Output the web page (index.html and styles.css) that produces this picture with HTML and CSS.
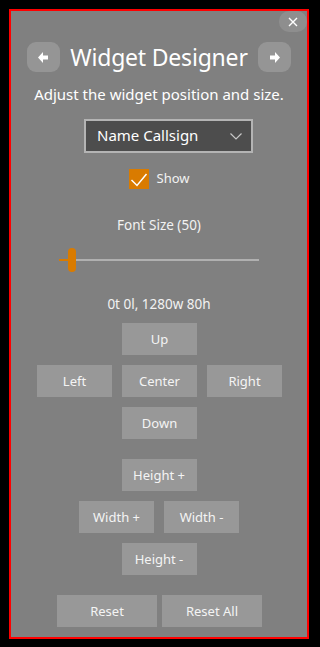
FILE: index.html
```html
<!DOCTYPE html>
<html>
<head>
<meta charset="utf-8">
<link rel="stylesheet" href="styles.css">
</head>
<body>
<div class="panel">
  <button class="close" aria-label="Close">
    <svg width="10" height="10" viewBox="0 0 10 10"><path d="M1 1 L9 9 M9 1 L1 9" stroke="#fff" stroke-width="1.4" fill="none"/></svg>
  </button>
  <div class="header">
    <button class="nav" aria-label="Previous">
      <svg width="11" height="11" viewBox="0 0 11 11"><path d="M0 5.5 L5 0 L5 3.5 L10 3.5 L10 7.5 L5 7.5 L5 11 Z" fill="#fff"/></svg>
    </button>
    <h1 class="title">Widget Designer</h1>
    <button class="nav" aria-label="Next">
      <svg width="11" height="11" viewBox="0 0 11 11"><path d="M11 5.5 L6 0 L6 3.5 L1 3.5 L1 7.5 L6 7.5 L6 11 Z" fill="#fff"/></svg>
    </button>
  </div>
  <p class="subtitle">Adjust the widget position and size.</p>
  <div class="select">
    <span class="select-text">Name Callsign</span>
    <svg class="chevron" width="12" height="7" viewBox="0 0 12 7"><path d="M0.5 0.5 L6 6 L11.5 0.5" stroke="#c8c8c8" stroke-width="1.2" fill="none"/></svg>
  </div>
  <label class="check-row">
    <span class="checkbox">
      <svg width="20" height="20" viewBox="0 0 20 20"><path d="M2.5 11 L8 16.5 L17.5 5" stroke="#fff" stroke-width="1.5" fill="none"/></svg>
    </span>
    <span class="check-label">Show</span>
  </label>
  <div class="label font-label">Font Size (50)</div>
  <div class="slider">
    <div class="track"></div>
    <div class="fill"></div>
    <div class="thumb"></div>
  </div>
  <div class="label status">0t 0l, 1280w 80h</div>
  <div class="pad">
    <button class="btn up">Up</button>
    <button class="btn left">Left</button>
    <button class="btn center">Center</button>
    <button class="btn right">Right</button>
    <button class="btn down">Down</button>
  </div>
  <div class="size">
    <button class="btn hplus">Height +</button>
    <div class="size-row">
      <button class="btn">Width +</button>
      <button class="btn">Width -</button>
    </div>
    <button class="btn">Height -</button>
  </div>
  <div class="reset-row">
    <button class="btn wide">Reset</button>
    <button class="btn wide">Reset All</button>
  </div>
</div>
</body>
</html>
```
FILE: styles.css
```css
* { box-sizing: border-box; }
html, body { margin: 0; }
body {
  background: #000;
  padding: 9px 8px 8px 9px;
  font-family: "Noto Sans", "Open Sans", sans-serif;
  color: #f2f2f2;
}
button { font-family: inherit; border: none; padding: 0; margin: 0; cursor: pointer; }
.panel {
  position: relative;
  width: 300px;
  height: 630px;
  border: 2px solid #ff0000;
  background: #808080;
  display: flex;
  flex-direction: column;
  align-items: center;
}
.close {
  position: absolute;
  top: 0;
  right: 0;
  width: 28px;
  height: 21px;
  border-radius: 10px;
  background: #8e8e8e;
  display: flex;
  align-items: center;
  justify-content: center;
}
.close svg { display: block; }
.header {
  margin-top: 31px;
  width: 100%;
  height: 30px;
  padding: 0 16px;
  display: flex;
  align-items: center;
  justify-content: space-between;
}
.nav {
  width: 33px;
  height: 30px;
  border-radius: 9px;
  background: #959595;
  display: flex;
  align-items: center;
  justify-content: center;
}
.nav svg { display: block; }
.title {
  margin: 0;
  font-weight: 400;
  font-size: 23px;
  line-height: 30px;
  color: #fff;
  letter-spacing: -0.2px;
}
.subtitle {
  margin: 12px 0 0;
  font-size: 15px;
  line-height: 20px;
  color: #fff;
}
.select {
  margin-top: 15px;
  margin-left: 19px;
  width: 169px;
  height: 34px;
  border: 2px solid #b4b4b4;
  background: #4d4d4d;
  display: flex;
  align-items: center;
  justify-content: space-between;
  padding: 0 9px 2px 11px;
}
.select-text { font-size: 15px; color: #fff; }
.chevron { display: block; margin-top: 2px; }
.check-row {
  margin-top: 16px;
  height: 20px;
  display: flex;
  align-items: center;
  gap: 8px;
}
.checkbox {
  width: 20px;
  height: 20px;
  background: #d97b00;
  display: block;
}
.checkbox svg { display: block; }
.check-label { font-size: 13px; line-height: 20px; margin-top: -3px; }
.label { font-size: 13.5px; line-height: 18px; }
.font-label { margin-top: 27px; }
.slider {
  position: relative;
  margin-top: 14px;
  width: 200px;
  height: 24px;
}
.track {
  position: absolute;
  left: 0; right: 0;
  top: 11px;
  height: 2px;
  background: #b0b0b0;
}
.fill {
  position: absolute;
  left: 0;
  width: 12px;
  top: 11px;
  height: 2px;
  background: #d97b00;
}
.thumb {
  position: absolute;
  left: 9px;
  top: 0;
  width: 8px;
  height: 24px;
  border-radius: 4px;
  background: #d97b00;
}
.status { margin-top: 23px; }
.btn {
  width: 75px;
  height: 32px;
  background: #989898;
  color: #f4f4f4;
  font-size: 13px;
}
.pad {
  margin-top: 10px;
  display: grid;
  grid-template-columns: 75px 75px 75px;
  grid-auto-rows: 32px;
  gap: 10px;
  margin-left: 1px;
}
.up { grid-column: 2; }
.left { grid-column: 1; }
.center { grid-column: 2; }
.right { grid-column: 3; }
.down { grid-column: 2; }
.size {
  margin-top: 20px;
  display: flex;
  flex-direction: column;
  align-items: center;
  gap: 10px;
}
.size-row { display: flex; gap: 10px; }
.reset-row {
  margin-top: 20px;
  display: flex;
  gap: 5px;
  margin-left: 1px;
}
.wide { width: 100px; }
```
